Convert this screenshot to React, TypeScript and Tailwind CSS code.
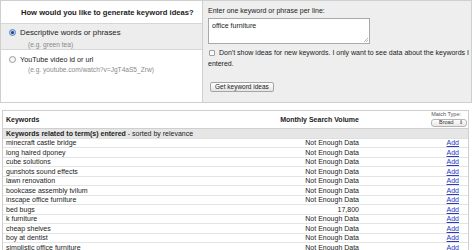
const rows: [string, string][] = [
  ["minecraft castle bridge", "Not Enough Data"],
  ["long haired dponey", "Not Enough Data"],
  ["cube solutions", "Not Enough Data"],
  ["gunshots sound effects", "Not Enough Data"],
  ["lawn renovation", "Not Enough Data"],
  ["bookcase assembly tvilum", "Not Enough Data"],
  ["inscape office furniture", "Not Enough Data"],
  ["bed bugs", "17,800"],
  ["k furniture", "Not Enough Data"],
  ["cheap shelves", "Not Enough Data"],
  ["boy at dentist", "Not Enough Data"],
  ["simplistic office furniture", "Not Enough Data"],
];

function Radio({ checked }: { checked?: boolean }) {
  if (checked) {
    return (
      <span className="grid size-[7px] shrink-0 place-items-center rounded-full border border-[#5b86c5] bg-[#b7d2f3]">
        <span className="size-[3px] rounded-full bg-[#1d3f77]" />
      </span>
    );
  }
  return <span className="size-[7px] shrink-0 rounded-full border border-[#9a9a9a] bg-[#f7f7f7]" />;
}

export default function App() {
  return (
    <div className="h-[250px] w-[472px] overflow-hidden bg-white font-['Liberation_Sans',Arial,sans-serif] text-[7px] leading-none text-[#222]">
      {/* idea source + keywords entry */}
      <div className="flex h-[103px] border border-[#cfcfcf]">
        <div className="flex w-[202px] flex-col border-r border-[#cfcfcf]">
          <div className="flex h-[23px] items-center border-b border-[#d6d6d6] pl-[20px] pt-[2px] text-[7.6px] font-bold">
            How would you like to generate keyword ideas?
          </div>
          <div className="flex h-[26px] flex-col border-b border-[#d6d6d6] bg-[#ededed] pt-[5px] pl-[8px]">
            <div className="flex items-center gap-[4px]">
              <Radio checked />
              <span className="text-[7.8px]">Descriptive words or phrases</span>
            </div>
            <div className="mt-[5px] pl-[19px] text-[6.6px] text-[#8a8a8a]">(e.g. green tea)</div>
          </div>
          <div className="flex flex-col pt-[6px] pl-[8px]">
            <div className="flex items-center gap-[4px]">
              <Radio />
              <span className="text-[7.2px]">YouTube video id or url</span>
            </div>
            <div className="mt-[4px] pl-[19px] text-[6.6px] text-[#8a8a8a]">
              (e.g. youtube.com/watch?v=JgT4aS5_Zrw)
            </div>
          </div>
        </div>
        <div className="flex flex-1 flex-col bg-[#eeeeee] pt-[6px] pl-[5px] pr-[2px]">
          <div>Enter one keyword or phrase per line:</div>
          <div className="relative mt-[4px] h-[26px] w-[162px] border border-[#a9a9a9] bg-white px-[3px] pt-[3px]">
            office furniture
            <svg className="absolute right-[1px] bottom-[1px]" width="5" height="5" viewBox="0 0 5 5">
              <path d="M1 5 L5 1 M3 5 L5 3" stroke="#999" strokeWidth="0.7" />
            </svg>
          </div>
          <div className="mt-[3px] leading-[11px]">
            <span className="mr-[4px] ml-[1px] inline-block size-[6px] translate-y-[1px] rounded-[1px] border border-[#a0a0a0] bg-[#fafafa]" />
            Don't show ideas for new keywords. I only want to see data about the keywords I entered.
          </div>
          <div className="mt-[13px] ml-[2px]">
            <button className="h-[10px] rounded-[2px] border border-[#a5a5a5] bg-gradient-to-b from-white to-[#e4e4e4] px-[4px] text-[6.5px] leading-none text-[#222]">
              Get keyword ideas
            </button>
          </div>
        </div>
      </div>

      {/* keyword ideas table */}
      <div className="mt-[7px] mr-[3px] ml-[2px] border-t border-r border-l border-[#cfcfcf]">
        <div className="flex h-[18px] items-center border-b border-[#cfcfcf]">
          <div className="flex-1 pl-[3px] font-bold">Keywords</div>
          <div className="w-[120px] text-right font-bold">Monthly Search Volume</div>
          <div className="flex w-[109px] flex-col items-end pr-[1px]">
            <span className="pr-[6px] text-[5.5px] text-[#555]">Match Type:</span>
            <span className="mt-[1px] flex h-[8px] w-[36px] items-center justify-between rounded-[3px] border border-[#b5b5b5] bg-gradient-to-b from-white to-[#e6e6e6] pr-[3px] pl-[7px] text-[5.5px] text-[#333]">
              Broad<span className="text-[5px]">&#8661;</span>
            </span>
          </div>
        </div>
        <div className="flex h-[9.5px] items-center border-b border-[#e0e0e0] bg-[#e6e6e6] pl-[3px]">
          <span className="font-bold">Keywords related to term(s) entered</span>
          <span>&nbsp;- sorted by relevance</span>
        </div>
        {rows.map(([kw, vol]) => (
          <div key={kw} className="flex h-[9.5px] items-center border-b border-[#e4e4e4]">
            <div className="flex-1 pl-[3px]">{kw}</div>
            <div className="w-[120px] text-right">{vol}</div>
            <div className="w-[109px] pr-[9px] text-right">
              <a className="text-[#2a3ac0] underline">Add</a>
            </div>
          </div>
        ))}
      </div>
    </div>
  );
}
